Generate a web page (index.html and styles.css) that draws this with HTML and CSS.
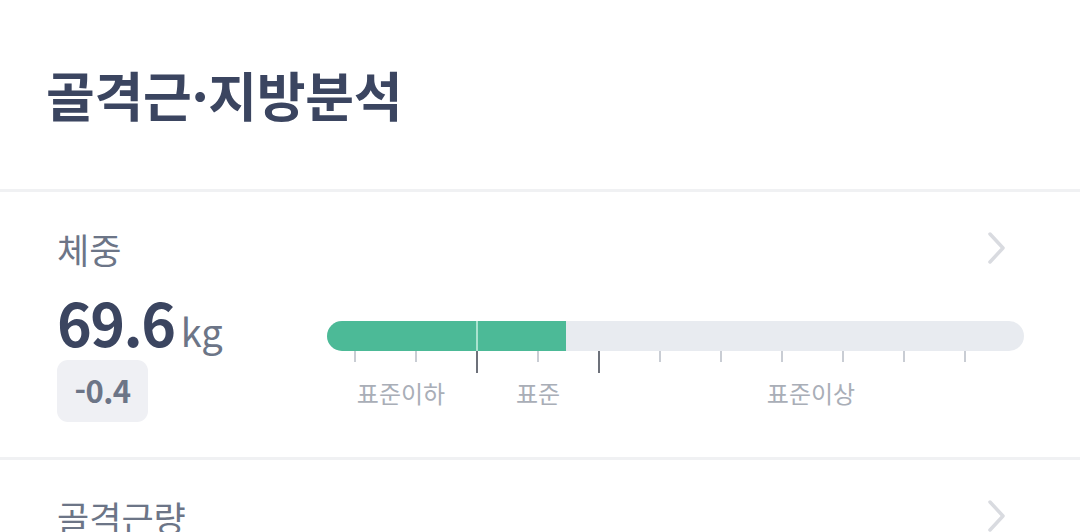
FILE: index.html
```html
<!DOCTYPE html>
<html lang="ko">
<head>
<meta charset="utf-8">
<link rel="stylesheet" href="styles.css">
</head>
<body>
<div class="page">
  <header class="header">
    <h1 class="title">골격근·지방분석</h1>
  </header>
  <section class="item">
    <div class="item-head">
      <span class="item-label">체중</span>
      <svg class="chev" width="22" height="34" viewBox="0 0 22 34"><path d="M4 3 L17 17 L4 31" fill="none" stroke="#d9dbe0" stroke-width="3.5" stroke-linecap="round" stroke-linejoin="round"/></svg>
    </div>
    <div class="item-body">
      <div class="value-col">
        <div class="value"><span class="num">69.6</span><span class="unit">kg</span></div>
        <div class="badge">-0.4</div>
      </div>
      <div class="gauge">
        <div class="bar">
          <div class="fill" style="width:34.3%"></div>
          <div class="split" style="left:21.4%"></div>
        </div>
        <div class="ticks">
          <span class="tick"></span><span class="tick"></span><span class="tick major"></span><span class="tick"></span><span class="tick major"></span><span class="tick"></span><span class="tick"></span><span class="tick"></span><span class="tick"></span><span class="tick"></span><span class="tick"></span>
        </div>
        <div class="labels">
          <span class="lbl lbl-low">표준이하</span>
          <span class="lbl lbl-std">표준</span>
          <span class="lbl lbl-high">표준이상</span>
        </div>
      </div>
    </div>
  </section>
  <section class="item">
    <div class="item-head">
      <span class="item-label">골격근량</span>
      <svg class="chev" width="22" height="34" viewBox="0 0 22 34"><path d="M4 3 L17 17 L4 31" fill="none" stroke="#d9dbe0" stroke-width="3.5" stroke-linecap="round" stroke-linejoin="round"/></svg>
    </div>
  </section>
</div>
</body>
</html>
```
FILE: styles.css
```css
* { box-sizing: border-box; }
html, body { margin: 0; padding: 0; background: #fff; }
body { font-family: "Noto Sans CJK KR", "Noto Sans", sans-serif; overflow: hidden; height: 532px; }
.page { width: 1080px; }
.header { height: 189px; padding: 58px 0 0 46px; }
.title { margin: 0; font-size: 53px; line-height: 72px; font-weight: 700; color: #3b4560; letter-spacing: -0.3px; }
.item { border-top: 3px solid #f0f1f3; padding: 0 56px 0 57px; height: 268px; overflow: hidden; }
.item-head { display: flex; justify-content: space-between; align-items: center; height: 88px; padding-top: 25px; }
.item-label { font-size: 35px; line-height: 50px; color: #6c7587; }
.chev { margin-right: 16px; margin-top: -2px; }
.item-body { display: flex; padding-top: 10px; }
.value-col { width: 270px; }
.value { display: flex; align-items: baseline; height: 64px; }
.num { font-size: 59px; font-weight: 700; color: #3b4560; line-height: 64px; letter-spacing: -1.5px; }
.unit { font-size: 38px; color: #6c7587; margin-left: 6px; }
.badge { display: inline-block; margin-top: 6px; width: 91px; height: 62px; border-radius: 11px; background: #eff0f4; color: #6c7587; font-size: 31px; font-weight: 700; line-height: 60px; text-align: center; letter-spacing: -0.5px; }
.gauge { flex: 1; padding-top: 31px; position: relative; }
.bar { position: relative; height: 30px; border-radius: 15px; background: #e8ebf0; overflow: hidden; }
.fill { height: 100%; background: #4cba97; }
.split { position: absolute; top: 0; bottom: 0; width: 2px; background: #a9e3cf; }
.ticks { display: flex; justify-content: space-between; padding: 0 58px 0 27px; height: 22px; }
.tick { width: 2px; height: 11px; background: #c9cdd4; }
.tick.major { height: 22px; background: #6d717a; }
.labels { position: relative; height: 40px; }
.lbl { position: absolute; top: 2px; font-size: 24px; color: #a9aeb7; transform: translateX(-50%); white-space: nowrap; }
.lbl-low { left: 74px; }
.lbl-std { left: 211px; }
.lbl-high { left: 484px; }
```
